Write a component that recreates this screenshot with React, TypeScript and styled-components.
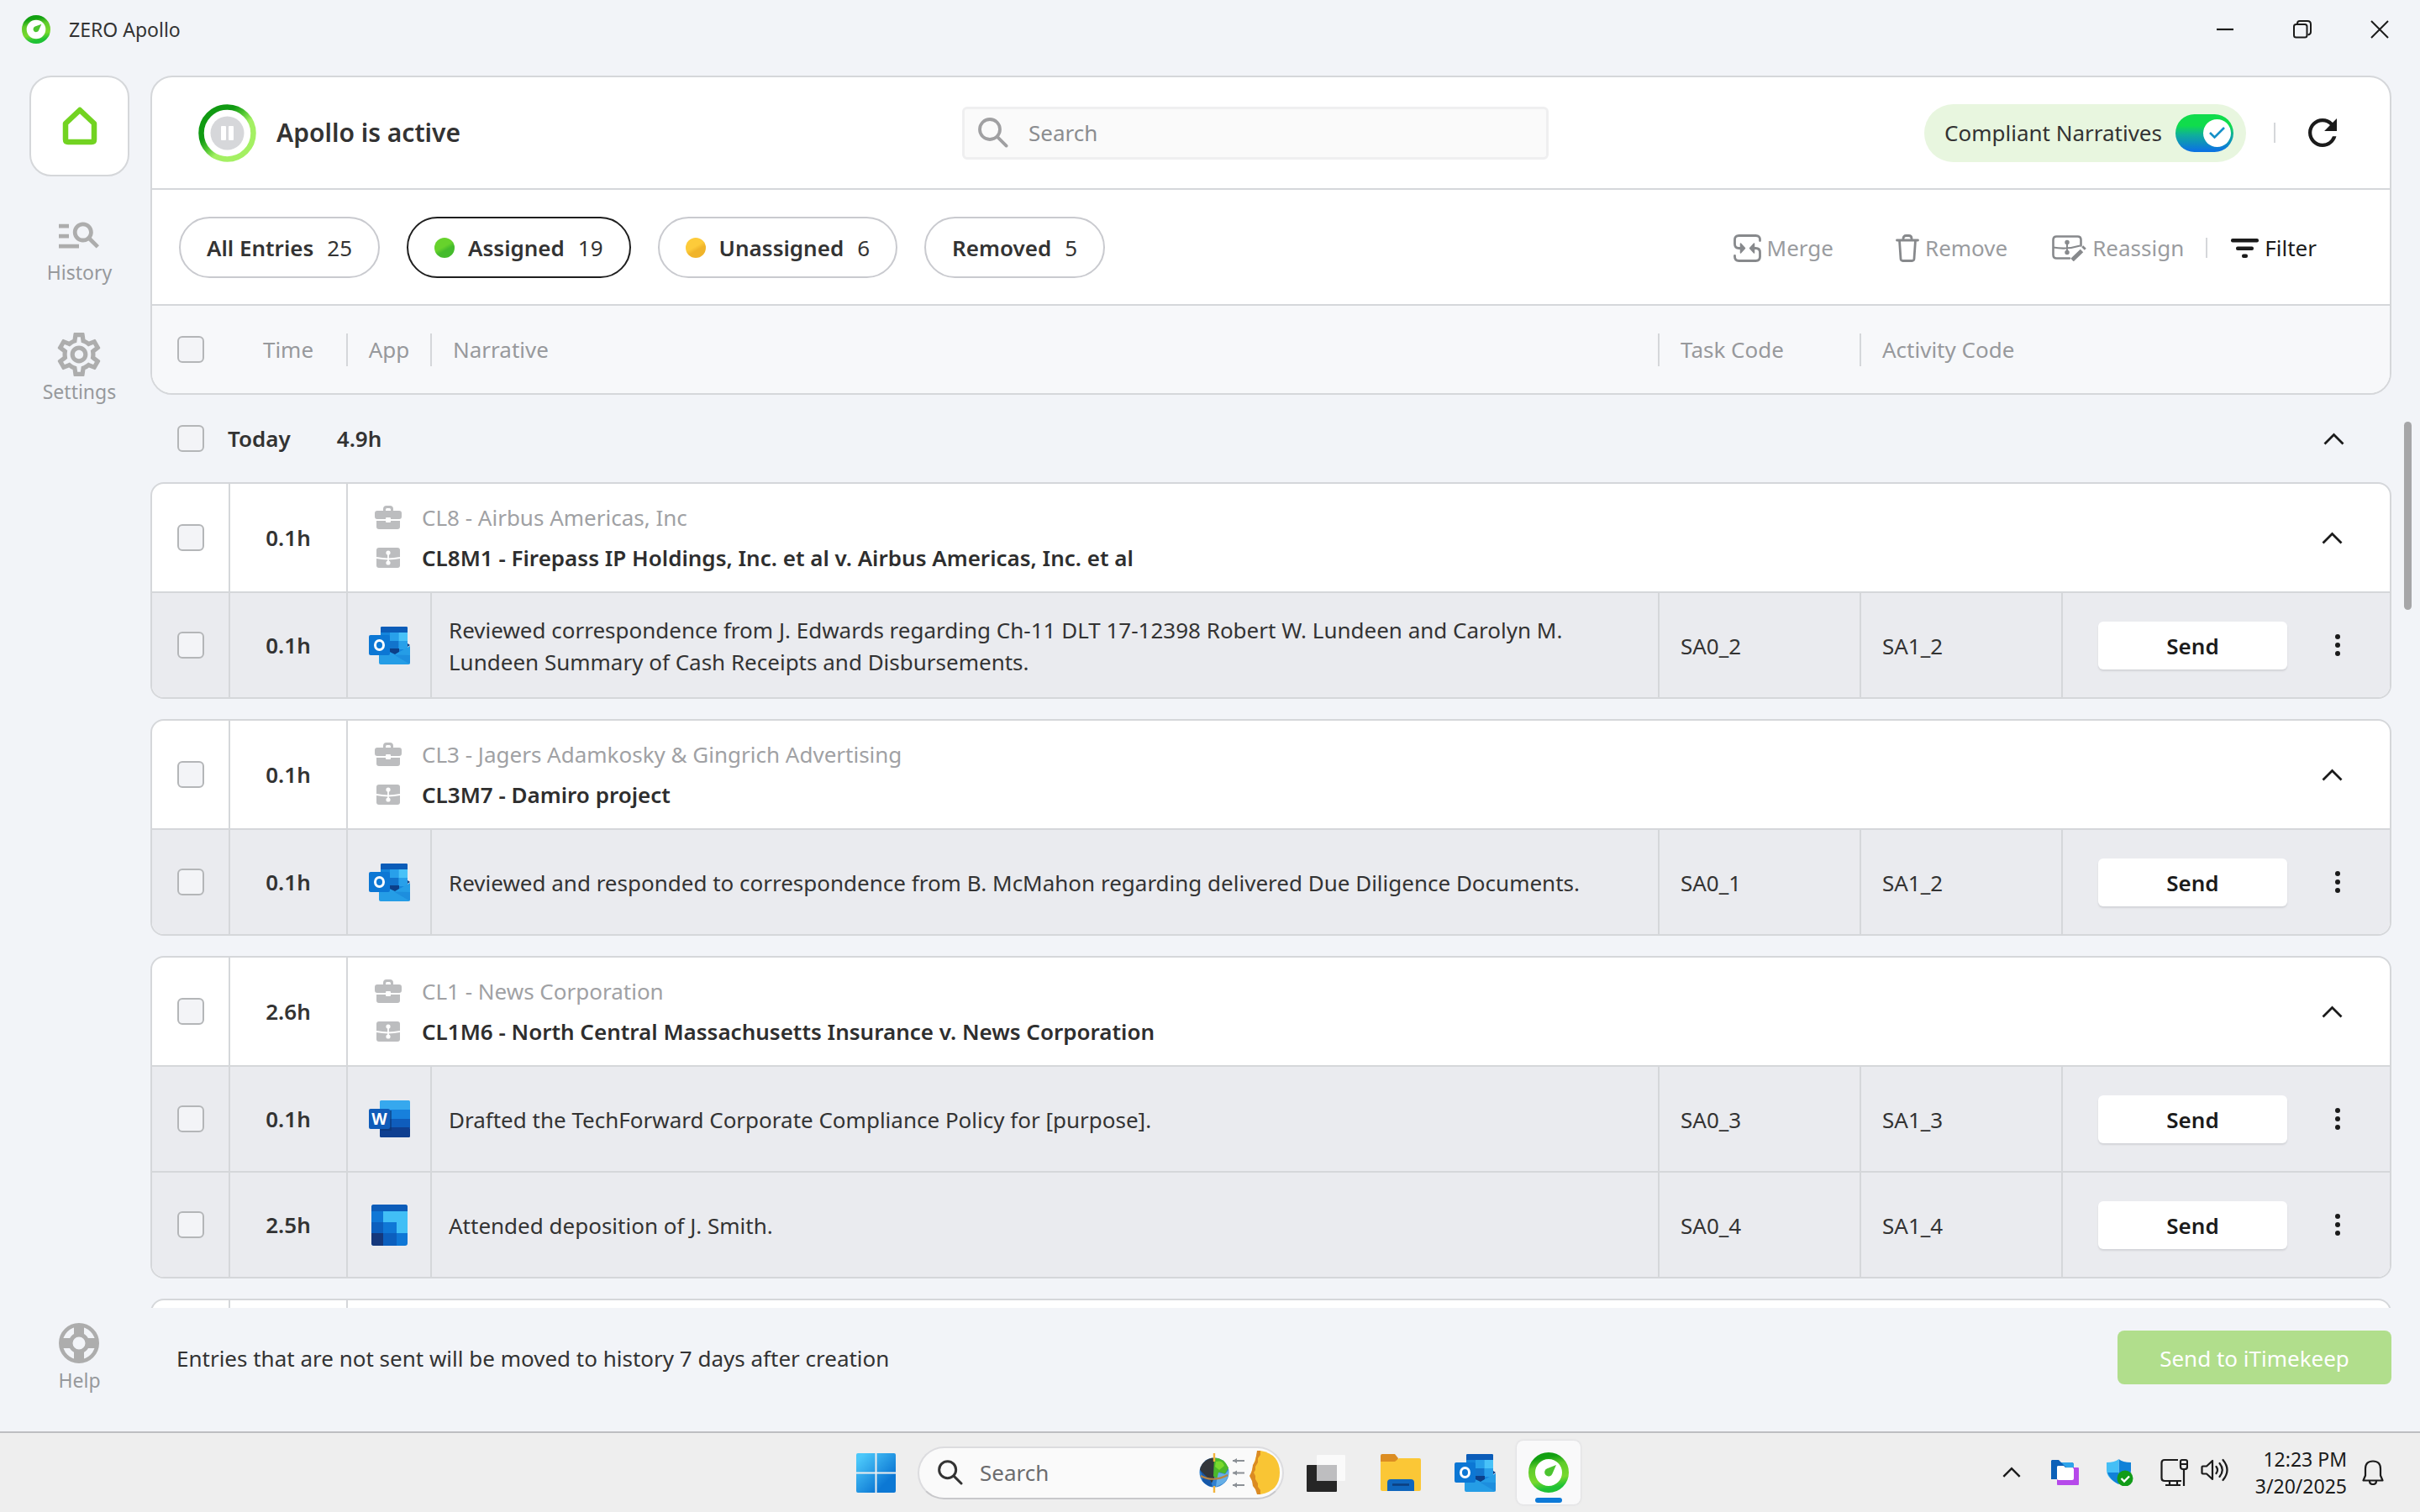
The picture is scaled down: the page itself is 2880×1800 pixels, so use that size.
import React, { useId } from 'react';
import styled, { createGlobalStyle } from 'styled-components';

const color = {
  page: '#f2f4f8',
  card: '#ffffff',
  row: '#eaebef',
  head: '#f7f8fa',
  line: '#d5d7da',
  text: '#333333',
  muted: '#97999c',
  icon: '#adadad',
  ink: '#1b1b1b',
};

const GlobalStyle = createGlobalStyle`
  *, *::before, *::after { box-sizing: border-box; }
  body {
    margin: 0;
    background: ${color.page};
    color: ${color.text};
    font-family: "Noto Sans", "Open Sans", sans-serif;
    font-size: 26px;
    line-height: 38px;
  }
  button, input { font: inherit; color: inherit; }
  button { border: 0; background: none; padding: 0; cursor: pointer; }
  svg { display: block; flex: none; }
`;

/* ---------- Window shell ---------- */

const Window = styled.div`
  height: 100vh;
  display: flex;
  flex-direction: column;
  overflow: hidden;
`;

const TitleBar = styled.header`
  flex: none;
  height: 90px;
  padding: 16px 37px 0 26px;
  display: flex;
  align-items: flex-start;
  justify-content: space-between;
`;

const AppName = styled.div`
  display: flex;
  align-items: center;
  gap: 22px;
  font-size: 23px;
  white-space: nowrap;
`;

const WindowControls = styled.div`
  display: flex;
  align-items: center;
  gap: 70px;
  height: 38px;
`;

const IconButton = styled.button`
  display: flex;
  align-items: center;
  justify-content: center;
  color: ${color.ink};
`;

const Body = styled.div`
  flex: 1;
  min-height: 0;
  display: flex;
`;

const SideNav = styled.nav`
  flex: none;
  width: 179px;
  padding: 0 25px 42px 35px;
  display: flex;
  flex-direction: column;
  align-items: center;
`;

const HomeLink = styled.a`
  width: 100%;
  height: 120px;
  margin-bottom: 45px;
  display: flex;
  align-items: center;
  justify-content: center;
  border: 2px solid ${color.line};
  border-radius: 26px;
  background: ${color.card};
`;

const NavLink = styled.a<{ $last?: boolean }>`
  display: flex;
  flex-direction: column;
  align-items: center;
  margin-top: ${(p) => (p.$last ? 'auto' : '0')};
  margin-bottom: ${(p) => (p.$last ? '0' : '54px')};
  color: ${color.muted};
  font-size: 23px;
  text-decoration: none;
  svg { color: ${color.icon}; }
`;

const NavIcon = styled.span`
  height: 50px;
  display: flex;
  align-items: center;
`;

const Main = styled.main`
  flex: 1;
  min-width: 0;
  display: flex;
  flex-direction: column;
`;

const ScrollRail = styled.div`
  flex: none;
  width: 34px;
  padding: 412px 10px 0 15px;
`;

const ScrollThumb = styled.div`
  height: 224px;
  border-radius: 5px;
  background: #a6a6a8;
`;

/* ---------- Header card ---------- */

const HeaderCard = styled.section`
  flex: none;
  border: 2px solid ${color.line};
  border-radius: 26px;
  background: ${color.card};
  overflow: hidden;
`;

const StatusRow = styled.div`
  height: 134px;
  padding: 0 63px 0 55px;
  display: grid;
  grid-template-columns: 909fr 698fr 938fr;
  align-items: center;
  border-bottom: 2px solid ${color.line};
`;

const Status = styled.div`
  display: flex;
  align-items: center;
  gap: 24px;
`;

const StatusTitle = styled.h1`
  margin: 0;
  font-size: 30px;
  font-weight: 600;
`;

const SearchBox = styled.label`
  height: 63px;
  padding: 0 16px;
  display: flex;
  align-items: center;
  gap: 24px;
  border: 3px solid #efeff0;
  border-radius: 6px;
  background: #fafafa;
  color: #a0a0a2;
`;

const SearchInput = styled.input`
  flex: 1;
  min-width: 0;
  padding: 0;
  border: 0;
  outline: 0;
  background: none;
  &::placeholder { color: #8b8d90; opacity: 1; }
`;

const StatusTools = styled.div`
  display: flex;
  align-items: center;
  justify-content: flex-end;
  gap: 33px;
`;

const CompliantToggle = styled.label`
  height: 69px;
  padding: 0 15px 0 24px;
  display: flex;
  align-items: center;
  gap: 16px;
  border-radius: 35px;
  background: #e8f6df;
  white-space: nowrap;
`;

const SwitchBox = styled.span`
  position: relative;
  display: flex;
`;

const SwitchInput = styled.input`
  appearance: none;
  width: 69px;
  height: 45px;
  margin: 0;
  border-radius: 23px;
  background: linear-gradient(#10dc4c 30%, #0fae9b 55%, #0c74e0 95%);
`;

const SwitchKnob = styled.span`
  position: absolute;
  top: 6px;
  right: 3px;
  width: 33px;
  height: 33px;
  display: flex;
  align-items: center;
  justify-content: center;
  border-radius: 50%;
  background: #fff;
  pointer-events: none;
`;

const Divider = styled.span`
  flex: none;
  width: 2px;
  height: 24px;
  background: ${color.line};
`;

const RefreshButton = styled(IconButton)`
  padding-left: 6px;
`;

const FilterRow = styled.div`
  height: 138px;
  padding: 0 87px 0 32px;
  display: flex;
  align-items: center;
  justify-content: space-between;
  border-bottom: 2px solid ${color.line};
`;

const Pills = styled.div`
  display: flex;
  gap: 32px;
`;

const Pill = styled.button<{ $active?: boolean }>`
  height: 73px;
  padding: 2px 31px 0;
  display: flex;
  align-items: center;
  gap: 16px;
  border: 2px solid ${(p) => (p.$active ? '#1f1f1f' : '#c9cacf')};
  border-radius: 37px;
  white-space: nowrap;
`;

const PillLabel = styled.span`
  font-weight: 600;
`;

const StatusDot = styled.span<{ $from: string; $to: string }>`
  width: 24px;
  height: 24px;
  border-radius: 50%;
  background: linear-gradient(150deg, ${(p) => p.$from} 45%, ${(p) => p.$to} 60%);
`;

const Actions = styled.div`
  padding-top: 2px;
  display: flex;
  align-items: center;
`;

const ActionButton = styled.button<{ $after: number; $strong?: boolean }>`
  margin-right: ${(p) => p.$after}px;
  display: flex;
  align-items: center;
  gap: 7px;
  color: ${(p) => (p.$strong ? color.ink : '#9a9c9f')};
  svg { color: ${(p) => (p.$strong ? color.ink : '#87898c')}; }
`;

const ActionDivider = styled(Divider)`
  margin-right: 28px;
`;

/* ---------- Tables ---------- */

const Grid = styled.table`
  width: 100%;
  table-layout: fixed;
  border-collapse: separate;
  border-spacing: 0;
`;

const ColumnHead = styled.th`
  height: 104px;
  padding: 0;
  background: ${color.head};
  color: ${color.muted};
  font-weight: 400;
  text-align: left;
`;

const ColumnLabel = styled.div<{ $rule?: boolean; $center?: boolean; $inset?: number }>`
  height: 39px;
  padding-left: ${(p) => p.$inset ?? 0}px;
  display: flex;
  align-items: center;
  justify-content: ${(p) => (p.$center ? 'center' : 'flex-start')};
  border-right: 2px solid ${(p) => (p.$rule ? color.line : 'transparent')};
`;

const Check = styled.input`
  appearance: none;
  flex: none;
  width: 32px;
  height: 32px;
  margin: 0;
  display: block;
  border: 2px solid #b4b6b8;
  border-radius: 6px;
  background: #f3f4f7;
`;

const List = styled.div`
  flex: 1;
  min-height: 0;
  overflow: hidden;
`;

const DayRow = styled.div`
  height: 104px;
  padding: 0 56px 0 32px;
  display: flex;
  align-items: center;
  justify-content: space-between;
`;

const DaySummary = styled.div`
  display: flex;
  align-items: center;
  gap: 28px;
  font-weight: 600;
`;

const DayTotal = styled.span`
  margin-left: 27px;
`;

const Group = styled.section`
  margin-bottom: 24px;
  border: 2px solid ${color.line};
  border-radius: 16px;
  background: ${color.card};
  overflow: hidden;
`;

const MatterCell = styled.td<{ $rule?: boolean }>`
  height: 128px;
  padding: 0;
  border-right: ${(p) => (p.$rule ? `2px solid ${color.line}` : '0')};
`;

const EntryCell = styled.td`
  height: 126px;
  padding: 0;
  border-top: 2px solid ${color.line};
  border-right: 2px solid ${color.line};
  background: ${color.row};
  &:last-child { border-right: 0; }
`;

const Center = styled.div`
  display: flex;
  align-items: center;
  justify-content: center;
  font-weight: 600;
`;

const CheckSlot = styled.div`
  padding-left: 30px;
`;

const MatterLayout = styled.div`
  padding: 0 56px 0 32px;
  display: flex;
  align-items: center;
  justify-content: space-between;
`;

const MatterLine = styled.div<{ $strong?: boolean }>`
  height: 48px;
  display: grid;
  grid-template-columns: 32px auto;
  justify-items: center;
  justify-content: start;
  align-items: center;
  column-gap: 24px;
  color: ${(p) => (p.$strong ? '#2e2e2e' : '#a0a1a4')};
  font-weight: ${(p) => (p.$strong ? 600 : 400)};
  svg { color: #bcbdbf; }
`;

const Narrative = styled.p`
  margin: 0;
  padding: 2px 60px 0 20px;
`;

const Code = styled.div`
  padding: 2px 0 0 25px;
`;

const RowActions = styled.div`
  padding: 0 59px 0 42px;
  display: flex;
  align-items: center;
  justify-content: space-between;
`;

const SendButton = styled.button`
  width: 225px;
  height: 57px;
  padding-top: 2px;
  border-radius: 6px;
  background: #fff;
  box-shadow: 0 2px 2px #d3d4d8;
  color: ${color.ink};
  font-weight: 600;
`;

const Footer = styled.footer`
  flex: none;
  height: 147px;
  padding: 27px 0 0 31px;
  display: flex;
  align-items: flex-start;
  justify-content: space-between;
  line-height: 66px;
`;

const SubmitButton = styled.button`
  width: 326px;
  height: 64px;
  border-radius: 8px;
  background: #b1de8c;
  color: #fff;
`;

/* ---------- Taskbar ---------- */

const Taskbar = styled.footer`
  flex: none;
  height: 96px;
  padding: 0 43px;
  display: grid;
  grid-template-columns: 1fr auto 1fr;
  align-items: center;
  border-top: 2px solid #bdbec1;
  background: #eeeeee;
`;

const Pinned = styled.div`
  grid-column: 2;
  padding-left: 20px;
  display: flex;
  align-items: center;
`;

const PinnedButton = styled(IconButton)<{ $before?: number }>`
  margin-left: ${(p) => p.$before ?? 0}px;
`;

const TaskSearch = styled.label`
  width: 436px;
  height: 63px;
  margin-left: 26px;
  padding: 0 1px 0 22px;
  display: flex;
  align-items: center;
  gap: 20px;
  border: 2px solid #dcdcdf;
  border-bottom-color: #c8c8cb;
  border-radius: 32px;
  background: #fafafa;
`;

const TaskSearchInput = styled(SearchInput)`
  &::placeholder { color: #6c6c6e; opacity: 1; }
`;

const ActiveTile = styled(PinnedButton)`
  width: 76px;
  height: 76px;
  padding-top: 12px;
  flex-direction: column;
  gap: 6px;
  border-radius: 8px;
  background: #f9f9fa;
  box-shadow: 0 0 3px #cfcfd4;
`;

const ActiveMark = styled.span`
  width: 32px;
  height: 6px;
  border-radius: 3px;
  background: #0d7ad8;
`;

const Tray = styled.div`
  display: flex;
  align-items: center;
  justify-content: flex-end;
  gap: 32px;
`;

const TrayToggle = styled(IconButton)`
  padding-right: 4px;
`;

const TrayPair = styled.div`
  display: flex;
  gap: 15px;
`;

const ClockGroup = styled.div`
  display: flex;
  align-items: center;
  gap: 18px;
`;

const Clock = styled.time`
  font-size: 23px;
  line-height: 32px;
  text-align: right;
  color: ${color.ink};
  white-space: nowrap;
`;

/* ---------- Drawings ---------- */

const ApolloLogo = ({ size }: { size: number }) => {
  const id = useId();
  return (
    <svg width={size} height={size} viewBox="0 0 48 48" aria-hidden="true">
      <defs>
        <linearGradient id={id} x1="0.4" y1="0" x2="0.6" y2="1">
          <stop offset="0.05" stopColor="#12a012" />
          <stop offset="0.3" stopColor="#5fcb2b" />
          <stop offset="0.7" stopColor="#78d92c" />
          <stop offset="0.95" stopColor="#1fc235" />
        </linearGradient>
      </defs>
      <circle cx="24" cy="24" r="20" fill="#fff" stroke={`url(#${id})`} strokeWidth="8" />
      <path d="M33 15 28.4 25.4a4.8 4.8 0 1 1-6.2-6.2Z" fill="#4cc430" />
    </svg>
  );
};

const PauseRing = () => (
  <svg width="69" height="69" viewBox="0 0 69 69" aria-hidden="true">
    <defs>
      <linearGradient id="ring" x1="0" y1="0" x2="1" y2="1">
        <stop offset="0.32" stopColor="#109a12" />
        <stop offset="0.46" stopColor="#4fc531" />
        <stop offset="0.6" stopColor="#a4f063" />
      </linearGradient>
    </defs>
    <circle cx="34.5" cy="34.5" r="31" fill="none" stroke="url(#ring)" strokeWidth="6.5" />
    <circle cx="34.5" cy="34.5" r="20" fill="#d6d7da" />
    <rect x="27" y="26" width="6" height="17" rx="1" fill="#fff" />
    <rect x="36" y="26" width="6" height="17" rx="1" fill="#fff" />
  </svg>
);

const HomeIcon = () => (
  <svg width="42" height="46" viewBox="0 0 42 46" fill="none" stroke="#72d321" strokeWidth="6.5" strokeLinejoin="round" aria-hidden="true">
    <path d="M4 20 21 4l17 16v19q0 3-3 3H7q-3 0-3-3Z" />
  </svg>
);

const HistoryIcon = () => (
  <svg width="48" height="32" viewBox="2 6 20 13" fill="currentColor" aria-hidden="true">
    <path d="M7 9H2V7h5v2zm0 3H2v2h5v-2zm13.59 7-3.83-3.83c-.8.52-1.74.83-2.76.83-2.76 0-5-2.24-5-5s2.24-5 5-5 5 2.24 5 5c0 1.02-.31 1.96-.83 2.75L22 17.59 20.59 19zM17 11c0-1.65-1.35-3-3-3s-3 1.35-3 3 1.35 3 3 3 3-1.35 3-3zM2 19h10v-2H2v2z" />
  </svg>
);

const SettingsIcon = () => (
  <svg width="52" height="52" viewBox="2 2 20 20" fill="currentColor" aria-hidden="true">
    <path d="M19.43 12.98c.04-.32.07-.64.07-.98 0-.34-.03-.66-.07-.98l2.11-1.65c.19-.15.24-.42.12-.64l-2-3.46a.5.5 0 0 0-.61-.22l-2.49 1c-.52-.4-1.08-.73-1.69-.98l-.38-2.65A.488.488 0 0 0 14 2h-4c-.25 0-.46.18-.49.42l-.38 2.65c-.61.25-1.17.59-1.69.98l-2.49-1a.566.566 0 0 0-.18-.03c-.17 0-.34.09-.43.25l-2 3.46c-.13.22-.07.49.12.64l2.11 1.65c-.04.32-.07.65-.07.98 0 .33.03.66.07.98l-2.11 1.65c-.19.15-.24.42-.12.64l2 3.46a.5.5 0 0 0 .61.22l2.49-1c.52.4 1.08.73 1.69.98l.38 2.65c.03.24.24.42.49.42h4c.25 0 .46-.18.49-.42l.38-2.65c.61-.25 1.17-.59 1.69-.98l2.49 1c.06.02.12.03.18.03.17 0 .34-.09.43-.25l2-3.46c.12-.22.07-.49-.12-.64l-2.11-1.65zm-1.98-1.71c.04.31.05.52.05.73 0 .21-.02.43-.05.73l-.14 1.13.89.7 1.08.84-.7 1.21-1.27-.51-1.04-.42-.9.68c-.43.32-.84.56-1.25.73l-1.06.43-.16 1.13-.2 1.35h-1.4l-.19-1.35-.16-1.13-1.06-.43c-.43-.18-.83-.41-1.23-.71l-.91-.7-1.06.43-1.27.51-.7-1.21 1.08-.84.89-.7-.14-1.13c-.03-.31-.05-.54-.05-.74s.02-.43.05-.73l.14-1.13-.89-.7-1.08-.84.7-1.21 1.27.51 1.04.42.9-.68c.43-.32.84-.56 1.25-.73l1.06-.43.16-1.13.2-1.35h1.39l.19 1.35.16 1.13 1.06.43c.43.18.83.41 1.23.71l.91.7 1.06-.43 1.27-.51.7 1.21-1.07.85-.89.7.14 1.13zM12 8c-2.21 0-4 1.79-4 4s1.79 4 4 4 4-1.79 4-4-1.79-4-4-4zm0 6c-1.1 0-2-.9-2-2s.9-2 2-2 2 .9 2 2-.9 2-2 2z" />
  </svg>
);

const HelpIcon = () => (
  <svg width="48" height="48" viewBox="0 0 48 48" fill="none" stroke="currentColor" aria-hidden="true">
    <circle cx="24" cy="24" r="21.7" strokeWidth="4.6" />
    <circle cx="24" cy="24" r="10" strokeWidth="5" />
    <path d="M24 3v11M24 34v11M3 24h11M34 24h11" strokeWidth="12" />
  </svg>
);

const SearchIcon = ({ size, weight }: { size: number; weight: number }) => (
  <svg width={size} height={size} viewBox="0 0 36 36" fill="none" stroke="currentColor" strokeWidth={weight} strokeLinecap="round" aria-hidden="true">
    <circle cx="14" cy="14" r="12" />
    <path d="m22.6 22.6 11 11" />
  </svg>
);

const RefreshIcon = () => (
  <svg width="34" height="34" viewBox="4 4 16 16" fill="currentColor" aria-hidden="true">
    <path d="M17.65 6.35A7.958 7.958 0 0 0 12 4c-4.42 0-7.99 3.58-7.99 8s3.57 8 7.99 8c3.73 0 6.84-2.55 7.73-6h-2.08A5.99 5.99 0 0 1 12 18c-3.31 0-6-2.69-6-6s2.69-6 6-6c1.66 0 3.14.69 4.22 1.78L13 11h7V4l-2.35 2.35z" />
  </svg>
);

const SwitchTick = () => (
  <svg width="19" height="14" viewBox="0 0 19 14" fill="none" stroke="#1590c8" strokeWidth="2.6" aria-hidden="true">
    <path d="m1 7 5.5 5.5L18 1" />
  </svg>
);

const MergeIcon = () => (
  <svg width="33" height="33" viewBox="0 0 33 33" fill="none" stroke="currentColor" strokeWidth="2.8" strokeLinecap="round" aria-hidden="true">
    <path d="M31.5 7.500v-1q0-5-5-5h-20q-5 0-5 5v5q0 5 5 5H10" />
    <path d="M1.5 25.500v1q0 5 5 5h20q5 0 5-5v-5q0-5-5-5H23" />
    <path d="m8.5 11 5 5.5-5 5.500ZM24.5 11l-5 5.5 5 5.500Z" fill="currentColor" strokeWidth="1.5" strokeLinejoin="round" />
  </svg>
);

const TrashIcon = () => (
  <svg width="28" height="33" viewBox="0 0 28 33" fill="none" stroke="currentColor" strokeWidth="2.8" strokeLinecap="round" strokeLinejoin="round" aria-hidden="true">
    <path d="M1.5 7h25M9 7V5q0-3.5 3.5-3.5h3Q19 1.5 19 5v2M4.5 7 6 29q.2 2.5 2.5 2.5h11q2.3 0 2.5-2.5L23.5 7" />
  </svg>
);

const ReassignIcon = () => (
  <svg width="41" height="31" viewBox="0 0 41 31" fill="none" stroke="currentColor" strokeWidth="2.6" aria-hidden="true">
    <path d="M21 27.5H5.5q-4 0-4-4v-18q0-4 4-4h25q4 0 4 4v7" strokeLinecap="round" />
    <path d="M1.5 14.5q16 3 32-2M18 9v13" strokeWidth="2" />
    <circle cx="18" cy="8.5" r="2" fill="currentColor" strokeWidth="1.5" />
    <circle cx="18" cy="20.5" r="2" fill="currentColor" strokeWidth="1.5" />
    <path d="m24 29.5 11.5-11M37 16l2-2" strokeWidth="5" />
  </svg>
);

const FilterIcon = () => (
  <svg width="33" height="23" viewBox="0 0 33 23" fill="currentColor" aria-hidden="true">
    <rect width="33" height="4.5" rx="2" />
    <rect x="6" y="9.5" width="21" height="4.5" rx="2" />
    <rect x="13" y="18.5" width="7" height="4.5" rx="2" />
  </svg>
);

const Chevron = ({ width = 25 }: { width?: number }) => (
  <svg width={width} height={width * 0.6} viewBox="0 0 25 15" fill="none" stroke="currentColor" strokeWidth="2.8" aria-hidden="true">
    <path d="m1.5 13.5 11-11 11 11" />
  </svg>
);

const BriefcaseIcon = () => (
  <svg width="32" height="28" viewBox="0 0 32 28" fill="currentColor" aria-hidden="true">
    <path fillRule="evenodd" d="M10 6V4q0-4 4-4h4q4 0 4 4v2h7q3 0 3 3v4q0 3-3 3H3q-3 0-3-3V9q0-3 3-3ZM13 6h6V4.5Q19 3 17.5 3h-3Q13 3 13 4.5Z" />
    <path d="M2 18h28v7q0 3-3 3H5q-3 0-3-3Z" />
    <rect x="13" y="14" width="6" height="6" rx="1" fill="#fff" />
  </svg>
);

const MatterIcon = () => (
  <svg width="28" height="24" viewBox="0 0 28 24" aria-hidden="true">
    <rect width="28" height="24" rx="3" fill="currentColor" />
    <path d="M0 12q14 3 28 0M14 6v13" stroke="#fff" strokeWidth="1.8" fill="none" />
    <circle cx="14" cy="6" r="2.6" fill="#fff" />
    <circle cx="14" cy="18" r="2.6" fill="#fff" />
  </svg>
);

const KebabIcon = () => (
  <svg width="6" height="26" viewBox="0 0 6 26" fill="currentColor" aria-hidden="true">
    <circle cx="3" cy="3" r="3" />
    <circle cx="3" cy="13" r="3" />
    <circle cx="3" cy="23" r="3" />
  </svg>
);

const OutlookIcon = () => (
  <svg width="49" height="45" viewBox="0 0 49 45" aria-hidden="true">
    <rect x="14" width="32" height="36" rx="1.5" fill="#1485dc" />
    <path d="M14 1.5Q14 0 15.5 0h29Q46 0 46 1.5V7H14Z" fill="#0b5cb8" />
    <rect x="25" y="7" width="10.5" height="10" fill="#28a0ea" />
    <rect x="35.5" y="7" width="10.5" height="10" fill="#48c2f8" />
    <rect x="25" y="17" width="10.5" height="10" fill="#1274cc" />
    <rect x="35.5" y="17" width="10.5" height="10" fill="#28a0ea" />
    <path d="M24 26h12v4l-6 4-6-2Z" fill="#0c3f88" />
    <path d="m46 20 3 2-3 2Z" fill="#123e80" />
    <path d="M12 24v19q0 2 2 2h33q2 0 2-2V23L31 33Z" fill="#259de6" />
    <path d="m30 33.5 18.5 11L49 43V34Z" fill="#1580d6" opacity=".5" />
    <rect y="10" width="25" height="24" rx="2" fill="#0c77d4" />
    <ellipse cx="12.5" cy="22" rx="5" ry="5.6" fill="none" stroke="#fff" strokeWidth="3" />
  </svg>
);

const WordIcon = () => (
  <svg width="49" height="44" viewBox="0 0 49 44" aria-hidden="true">
    <rect x="13" width="36" height="12" rx="1.5" fill="#36a8ee" />
    <rect x="13" y="11" width="36" height="12" fill="#1780dc" />
    <rect x="13" y="22" width="36" height="11" fill="#0f5dbc" />
    <rect x="13" y="32" width="36" height="12" rx="1.5" fill="#0f3f90" />
    <rect x="14" y="12" width="13" height="24" fill="#0a3472" opacity=".6" />
    <rect y="10" width="25" height="24" rx="2" fill="#0f5cb9" />
    <text x="12.5" y="29" textAnchor="middle" fontSize="19" fontWeight="700" fontFamily="Open Sans, sans-serif" fill="#fff">W</text>
  </svg>
);

const CalendarIcon = () => (
  <svg width="43" height="49" viewBox="0 0 43 49" aria-hidden="true">
    <rect width="43" height="49" rx="3" fill="#0f77d6" />
    <path d="M0 3q0-3 3-3h37q3 0 3 3v5H0Z" fill="#0c5cb9" />
    <rect x="14" y="8" width="29" height="13" fill="#41bff6" />
    <rect x="30" y="20" width="13" height="14" fill="#41bff6" />
    <rect y="21" width="14" height="13" fill="#0c5fbe" />
    <path d="M0 34h14v15H3q-3 0-3-3Z" fill="#15387c" />
    <rect x="14" y="34" width="16" height="15" fill="#0c5fbe" />
  </svg>
);

const WindowsIcon = () => (
  <svg width="47" height="47" viewBox="0 0 47 47" aria-hidden="true">
    <defs>
      <linearGradient id="win" x1="0" y1="0" x2="47" y2="47" gradientUnits="userSpaceOnUse">
        <stop offset="0.1" stopColor="#4cc8fa" />
        <stop offset="0.75" stopColor="#0c78d4" />
      </linearGradient>
    </defs>
    <path d="M2 0h20.5v22.5H0V2q0-2 2-2ZM24.5 0H45q2 0 2 2v20.5H24.5ZM0 24.5h22.5V47H2q-2 0-2-2ZM24.5 24.5H47V45q0 2-2 2H24.5Z" fill="url(#win)" />
  </svg>
);

const SeasonArt = () => (
  <svg width="99" height="54" viewBox="0 0 99 54" aria-hidden="true">
    <circle cx="19" cy="27" r="17.5" fill="#2f7fd0" />
    <path d="M19 9.5a17.5 17.5 0 0 0-17 14l6 10 8 6 3-6Z" fill="#33373c" />
    <path d="M2 24q4 8 3 13 6 7 12 7l-2-7Z" fill="#1557a8" />
    <path d="M19 9.5q12 0 17 12l-4 7-7-2-2 8-5-3Z" fill="#4bb92b" />
    <path d="M21 14q8-2 10 5l-6 5-5-4Z" fill="#79d92e" />
    <path d="m24 27 8 2 4-5q1 10-6 16l-9 4 1-8Z" fill="#65aee6" />
    <path d="M3 31q15 8 32-1" fill="none" stroke="#b88442" strokeWidth="2" />
    <path d="M19 4v10M19 43v8" stroke="#f2b43c" strokeWidth="2.4" />
    <path d="M41 13h14M41 27.5h14M41 42h14" stroke="#8b9096" strokeWidth="2.2" />
    <path d="m46 10-5 3 5 3ZM46 24.5l-5 3 5 3ZM46 39l-5 3 5 3Z" fill="#8b9096" />
    <path d="M71 1h3q23 4 23 26T74 53h-3l-8-26Z" fill="#f9c534" />
    <path d="M70 1h4v5l-3 4v5l-3 5v4l-2 3 2 4v4l3 5v4l3 4v5h-4l-2-6-3-4-1-6-3-6 3-6 1-7 3-5Z" fill="#db8b22" />
  </svg>
);

const TaskViewIcon = () => (
  <svg width="46" height="45" viewBox="0 0 46 45" aria-hidden="true">
    <rect y="13" width="36" height="32" rx="1" fill="#262626" />
    <rect x="12" y="1" width="34" height="31" rx="1" fill="#fafafa" />
    <path d="M12 13h24v19H12Z" fill="#bebec0" />
  </svg>
);

const ExplorerIcon = () => (
  <svg width="48" height="44" viewBox="0 0 48 44" aria-hidden="true">
    <path d="M0 2q0-2 2-2h15l4 5-3 8H0Z" fill="#dc8d22" />
    <path d="M0 9h17l5-4h24q2 0 2 2v35q0 2-2 2H2q-2 0-2-2Z" fill="#fbc736" />
    <path d="M8 44V34q0-4 4-4h24q4 0 4 4v10Z" fill="#0f66bd" />
    <path d="M14 36.5h20" stroke="#0c3f80" strokeWidth="2.6" />
  </svg>
);

const TrayFolderIcon = () => (
  <svg width="34" height="30" viewBox="0 0 34 30" aria-hidden="true">
    <path d="M1 0h8l3 3h12q3 0 3 3v3H7v14H0V1Z" fill="#0c60b8" />
    <path d="M12 3h12q3 0 3 3v3h-9Z" fill="#2ea4ea" />
    <path d="M26 9h6q1 0 1 1v19q0 1-1 1H8q-1 0-1-1v-6h19Z" fill="#b649ea" />
    <path d="M8 7h7l3 3h8q1 0 1 1v11q0 2-2 2H9q-2 0-2-2V8Z" fill="#fff" />
  </svg>
);

const ShieldIcon = () => (
  <svg width="32" height="32" viewBox="0 0 32 32" aria-hidden="true">
    <path d="M14.5 0Q19 4 29 4v9q0 10-14.5 17Z" fill="#1181d8" />
    <path d="M14.5 0Q10 4 0 4v9q0 10 14.5 17Z" fill="#45bff6" />
    <path d="M1 16h13.5v14Q4 25 1 16Z" fill="#1181d8" />
    <circle cx="22" cy="23" r="9.5" fill="#129c18" />
    <path d="m17.5 23 3.5 3.5 6-6" fill="none" stroke="#fff" strokeWidth="2.4" />
  </svg>
);

const NetworkIcon = () => (
  <svg width="33" height="34" viewBox="0 0 33 34" fill="none" stroke={color.ink} strokeWidth="2.2" aria-hidden="true">
    <path d="M21 2H5Q1.5 2 1.5 5.5v18Q1.5 27 5 27h20M11 27v4.5M20 27v4.5M6 32h18" />
    <path d="M24 4q0-2 2-2h4q2 0 2 2v6q0 3-3 3h-2q-3 0-3-3ZM24 7h8M28 13v20" />
  </svg>
);

const SpeakerIcon = () => (
  <svg width="33" height="28" viewBox="0 0 33 28" fill="none" stroke={color.ink} strokeWidth="2.2" strokeLinejoin="round" strokeLinecap="round" aria-hidden="true">
    <path d="M1.5 10.5q0-1 1-1H7L14 3v22l-7-6.5H2.5q-1 0-1-1Z" />
    <path d="M18.5 10q3 4 0 8M22.5 6q6.500 8 0 16M26.5 2q10 12 0 24" />
  </svg>
);

const BellIcon = () => (
  <svg width="26" height="30" viewBox="0 0 26 30" fill="none" stroke={color.ink} strokeWidth="2.2" strokeLinejoin="round" aria-hidden="true">
    <path d="M13 1.5q-9 0-9 9v8l-2.5 6h23l-2.5-6v-8q0-9-9-9Z" />
    <path d="M9 25q0 4 4 4t4-4" />
  </svg>
);

/* ---------- Data ---------- */

type AppKind = 'outlook' | 'word' | 'calendar';
interface Entry { time: string; app: AppKind; text: string; task: string; activity: string }
interface Matter { time: string; client: string; matter: string; entries: Entry[] }

const matters: Matter[] = [
  {
    time: '0.1h',
    client: 'CL8 - Airbus Americas, Inc',
    matter: 'CL8M1 - Firepass IP Holdings, Inc. et al v. Airbus Americas, Inc. et al',
    entries: [
      {
        time: '0.1h',
        app: 'outlook',
        text: 'Reviewed correspondence from J. Edwards regarding Ch-11 DLT 17-12398 Robert W. Lundeen and Carolyn M. Lundeen Summary of Cash Receipts and Disbursements.',
        task: 'SA0_2',
        activity: 'SA1_2',
      },
    ],
  },
  {
    time: '0.1h',
    client: 'CL3 - Jagers Adamkosky & Gingrich Advertising',
    matter: 'CL3M7 - Damiro project',
    entries: [
      {
        time: '0.1h',
        app: 'outlook',
        text: 'Reviewed and responded to correspondence from B. McMahon regarding delivered Due Diligence Documents.',
        task: 'SA0_1',
        activity: 'SA1_2',
      },
    ],
  },
  {
    time: '2.6h',
    client: 'CL1 - News Corporation',
    matter: 'CL1M6 - North Central Massachusetts Insurance v. News Corporation',
    entries: [
      {
        time: '0.1h',
        app: 'word',
        text: 'Drafted the TechForward Corporate Compliance Policy for [purpose].',
        task: 'SA0_3',
        activity: 'SA1_3',
      },
      { time: '2.5h', app: 'calendar', text: 'Attended deposition of J. Smith.', task: 'SA0_4', activity: 'SA1_4' },
    ],
  },
];

const appIcons: Record<AppKind, React.ReactNode> = {
  outlook: <OutlookIcon />,
  word: <WordIcon />,
  calendar: <CalendarIcon />,
};

const Columns = () => (
  <colgroup>
    <col width="93" />
    <col width="140" />
    <col width="100" />
    <col />
    <col width="240" />
    <col width="240" />
    <col width="389" />
  </colgroup>
);

const MatterGroup = ({ item }: { item: Matter }) => (
  <Group>
    <Grid>
      <Columns />
      <tbody>
        <tr>
          <MatterCell $rule>
            <CheckSlot><Check type="checkbox" aria-label={`Select ${item.matter}`} /></CheckSlot>
          </MatterCell>
          <MatterCell $rule><Center>{item.time}</Center></MatterCell>
          <MatterCell colSpan={5}>
            <MatterLayout>
              <div>
                <MatterLine><BriefcaseIcon />{item.client}</MatterLine>
                <MatterLine $strong><MatterIcon />{item.matter}</MatterLine>
              </div>
              <IconButton aria-label="Collapse matter"><Chevron /></IconButton>
            </MatterLayout>
          </MatterCell>
        </tr>
        {item.entries.map((entry) => (
          <tr key={entry.text}>
            <EntryCell>
              <CheckSlot><Check type="checkbox" aria-label={`Select entry ${entry.text}`} /></CheckSlot>
            </EntryCell>
            <EntryCell><Center>{entry.time}</Center></EntryCell>
            <EntryCell><Center>{appIcons[entry.app]}</Center></EntryCell>
            <EntryCell><Narrative>{entry.text}</Narrative></EntryCell>
            <EntryCell><Code>{entry.task}</Code></EntryCell>
            <EntryCell><Code>{entry.activity}</Code></EntryCell>
            <EntryCell>
              <RowActions>
                <SendButton>Send</SendButton>
                <IconButton aria-label="More options"><KebabIcon /></IconButton>
              </RowActions>
            </EntryCell>
          </tr>
        ))}
      </tbody>
    </Grid>
  </Group>
);

const NextGroup = () => (
  <Group>
    <Grid>
      <Columns />
      <tbody>
        <tr>
          <MatterCell $rule />
          <MatterCell $rule />
          <MatterCell colSpan={5} />
        </tr>
      </tbody>
    </Grid>
  </Group>
);

export default function App() {
  return (
    <Window>
      <GlobalStyle />
      <TitleBar>
        <AppName><ApolloLogo size={34} />ZERO Apollo</AppName>
        <WindowControls>
          <IconButton aria-label="Minimize">
            <svg width="22" height="22" viewBox="0 0 22 22" stroke="currentColor" strokeWidth="2.2" aria-hidden="true"><path d="M1 11h20" /></svg>
          </IconButton>
          <IconButton aria-label="Restore">
            <svg width="22" height="22" viewBox="0 0 22 22" fill="none" stroke="currentColor" strokeWidth="2" aria-hidden="true">
              <rect x="1" y="5" width="15.5" height="15.5" rx="2.5" />
              <path d="M5 5V4q0-3 3-3h9q4 0 4 4v9q0 3-3.5 3.5" />
            </svg>
          </IconButton>
          <IconButton aria-label="Close">
            <svg width="22" height="22" viewBox="0 0 22 22" stroke="currentColor" strokeWidth="2" aria-hidden="true"><path d="m1 1 20 20M21 1 1 21" /></svg>
          </IconButton>
        </WindowControls>
      </TitleBar>

      <Body>
        <SideNav>
          <HomeLink href="#home" aria-label="Home"><HomeIcon /></HomeLink>
          <NavLink href="#history"><NavIcon><HistoryIcon /></NavIcon>History</NavLink>
          <NavLink href="#settings"><NavIcon><SettingsIcon /></NavIcon>Settings</NavLink>
          <NavLink href="#help" $last><NavIcon><HelpIcon /></NavIcon>Help</NavLink>
        </SideNav>

        <Main>
          <HeaderCard>
            <StatusRow>
              <Status><PauseRing /><StatusTitle>Apollo is active</StatusTitle></Status>
              <SearchBox>
                <SearchIcon size={36} weight={3.8} />
                <SearchInput type="text" placeholder="Search" aria-label="Search entries" />
              </SearchBox>
              <StatusTools>
                <CompliantToggle>
                  Compliant Narratives
                  <SwitchBox>
                    <SwitchInput type="checkbox" defaultChecked />
                    <SwitchKnob><SwitchTick /></SwitchKnob>
                  </SwitchBox>
                </CompliantToggle>
                <Divider />
                <RefreshButton aria-label="Refresh"><RefreshIcon /></RefreshButton>
              </StatusTools>
            </StatusRow>

            <FilterRow>
              <Pills>
                <Pill><PillLabel>All Entries</PillLabel>25</Pill>
                <Pill $active><StatusDot $from="#67d22c" $to="#44bb2c" /><PillLabel>Assigned</PillLabel>19</Pill>
                <Pill><StatusDot $from="#fdcb3a" $to="#f0b42a" /><PillLabel>Unassigned</PillLabel>6</Pill>
                <Pill><PillLabel>Removed</PillLabel>5</Pill>
              </Pills>
              <Actions>
                <ActionButton $after={74}><MergeIcon />Merge</ActionButton>
                <ActionButton $after={53}><TrashIcon />Remove</ActionButton>
                <ActionButton $after={26}><ReassignIcon />Reassign</ActionButton>
                <ActionDivider />
                <ActionButton $after={0} $strong><FilterIcon />Filter</ActionButton>
              </Actions>
            </FilterRow>

            <Grid>
              <Columns />
              <thead>
                <tr>
                  <ColumnHead scope="col"><CheckSlot><Check type="checkbox" aria-label="Select all entries" /></CheckSlot></ColumnHead>
                  <ColumnHead scope="col"><ColumnLabel $center $rule>Time</ColumnLabel></ColumnHead>
                  <ColumnHead scope="col"><ColumnLabel $center $rule>App</ColumnLabel></ColumnHead>
                  <ColumnHead scope="col"><ColumnLabel $inset={25} $rule>Narrative</ColumnLabel></ColumnHead>
                  <ColumnHead scope="col"><ColumnLabel $inset={25} $rule>Task Code</ColumnLabel></ColumnHead>
                  <ColumnHead scope="col"><ColumnLabel $inset={25}>Activity Code</ColumnLabel></ColumnHead>
                  <ColumnHead as="td" />
                </tr>
              </thead>
            </Grid>
          </HeaderCard>

          <List>
            <DayRow>
              <DaySummary>
                <Check type="checkbox" aria-label="Select all entries from today" />
                Today
                <DayTotal>4.9h</DayTotal>
              </DaySummary>
              <IconButton aria-label="Collapse day"><Chevron /></IconButton>
            </DayRow>
            {matters.map((item) => <MatterGroup key={item.matter} item={item} />)}
            <NextGroup />
          </List>

          <Footer>
            <span>Entries that are not sent will be moved to history 7 days after creation</span>
            <SubmitButton>Send to iTimekeep</SubmitButton>
          </Footer>
        </Main>

        <ScrollRail><ScrollThumb /></ScrollRail>
      </Body>

      <Taskbar>
        <Pinned>
          <PinnedButton aria-label="Start"><WindowsIcon /></PinnedButton>
          <TaskSearch>
            <SearchIcon size={30} weight={3.6} />
            <TaskSearchInput type="text" placeholder="Search" aria-label="Search the computer" />
            <SeasonArt />
          </TaskSearch>
          <PinnedButton $before={27} aria-label="Task view"><TaskViewIcon /></PinnedButton>
          <PinnedButton $before={42} aria-label="File Explorer"><ExplorerIcon /></PinnedButton>
          <PinnedButton $before={40} aria-label="Outlook"><OutlookIcon /></PinnedButton>
          <ActiveTile $before={25} aria-label="ZERO Apollo"><ApolloLogo size={48} /><ActiveMark /></ActiveTile>
        </Pinned>
        <Tray>
          <TrayToggle aria-label="Show hidden icons"><Chevron width={22} /></TrayToggle>
          <TrayFolderIcon />
          <ShieldIcon />
          <TrayPair><NetworkIcon /><SpeakerIcon /></TrayPair>
          <ClockGroup>
            <Clock>12:23 PM<br />3/20/2025</Clock>
            <BellIcon />
          </ClockGroup>
        </Tray>
      </Taskbar>
    </Window>
  );
}
